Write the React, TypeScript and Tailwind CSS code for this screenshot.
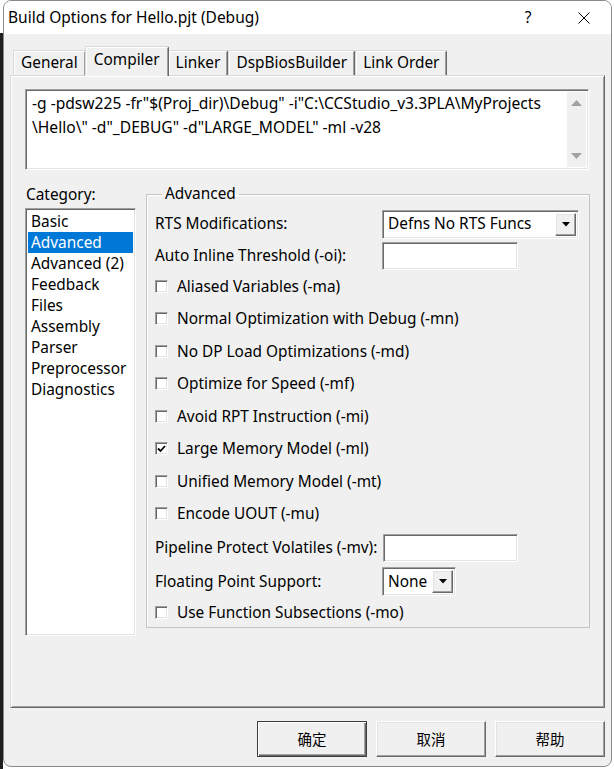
import React from 'react';

const font = { fontFamily: '"Noto Sans", "Noto Sans CJK SC", sans-serif' };

const sunken =
  'border border-t-[#a0a0a0] border-l-[#a0a0a0] border-r-white border-b-white shadow-[inset_1px_1px_0_#696969,inset_-1px_-1px_0_#e3e3e3]';
const raised =
  'border border-t-white border-l-white border-r-[#696969] border-b-[#696969] shadow-[inset_-1px_-1px_0_#a0a0a0,inset_1px_1px_0_#e3e3e3]';

const tabs = ['General', 'Compiler', 'Linker', 'DspBiosBuilder', 'Link Order'];
const categories = ['Basic', 'Advanced', 'Advanced (2)', 'Feedback', 'Files', 'Assembly', 'Parser', 'Preprocessor', 'Diagnostics'];

const checks: { label: string; checked?: boolean }[] = [
  { label: 'Aliased Variables (-ma)' },
  { label: 'Normal Optimization with Debug (-mn)' },
  { label: 'No DP Load Optimizations (-md)' },
  { label: 'Optimize for Speed (-mf)' },
  { label: 'Avoid RPT Instruction (-mi)' },
  { label: 'Large Memory Model (-ml)', checked: true },
  { label: 'Unified Memory Model (-mt)' },
  { label: 'Encode UOUT (-mu)' },
];

const CheckBox = ({ checked }: { checked?: boolean }) => (
  <div className={`w-[13px] h-[13px] bg-white flex items-center justify-center shrink-0 ${sunken}`}>
    {checked && (
      <svg width="9" height="8" viewBox="0 0 9 8">
        <path d="M1 3.5 L3.5 6 L8 1" fill="none" stroke="#000" strokeWidth="1.8" />
      </svg>
    )}
  </div>
);

const CheckRow = ({ label, checked }: { label: string; checked?: boolean }) => (
  <div className="h-[32.5px] flex items-center gap-[9px]">
    <CheckBox checked={checked} />
    <span>{label}</span>
  </div>
);

const DropArrow = () => (
  <div className={`w-[21px] h-full bg-[#f0f0f0] flex items-center justify-center ${raised}`}>
    <svg width="8" height="5" viewBox="0 0 8 5">
      <path d="M0 0 H8 L4 4.5 Z" fill="#000" />
    </svg>
  </div>
);

const Select = ({ value, width }: { value: string; width: string }) => (
  <div className={`${width} h-[29px] bg-white flex items-stretch p-[2px] ${sunken}`}>
    <div className="flex-1 flex items-center pl-[3px]">{value}</div>
    <DropArrow />
  </div>
);

const TextBox = ({ width }: { width: string }) => <div className={`${width} h-[28px] bg-white ${sunken}`} />;

export default function App() {
  return (
    <div className="w-[614px] h-[769px] flex bg-white text-black" style={font}>
      {/* desktop strip at the left */}
      <div className="w-[3px] flex flex-col">
        <div className="h-[33px] bg-white" />
        <div className="flex-1 bg-[#1e1e1e]" />
      </div>

      {/* dialog window */}
      <div className="w-[609px] h-[767px] flex flex-col border border-[#8a8a8a] rounded-lg overflow-hidden bg-[#f0f0f0]">
        {/* title bar */}
        <div className="h-[33px] bg-white flex items-center shrink-0">
          <span className="pl-[4px] text-[15.5px] flex-1">Build Options for Hello.pjt (Debug)</span>
          <span className="text-[15.5px] w-[20px] text-center mr-[40px]">?</span>
          <svg width="12" height="12" viewBox="0 0 12 12" className="mr-[21px]">
            <path d="M0.5 0.5 L11.5 11.5 M11.5 0.5 L0.5 11.5" stroke="#000" strokeWidth="1" />
          </svg>
        </div>

        <div className="flex-1 flex flex-col pt-[12px] pl-[6px] pr-[6px] text-[15.4px]">
          {/* tabs */}
          <div className="h-[29px] flex items-end pl-[3px]">
            {tabs.map((t) => {
              const active = t === 'Compiler';
              return (
                <div
                  key={t}
                  className={`flex items-center justify-center border-t border-l border-t-[#d8d8d8] border-l-[#d8d8d8] border-r border-r-[#696969] shadow-[inset_1px_1px_0_white,inset_-1px_0_0_#a0a0a0] rounded-t-[2px] bg-[#f0f0f0] ${
                    active ? 'h-[30px] -mb-px z-10 px-[8px] -mx-[1px] pb-[4px]' : 'h-[25px] px-[7px]'
                  }`}
                >
                  {t}
                </div>
              );
            })}
          </div>

          {/* tab page */}
          <div className="h-[633px] flex flex-col border border-t-[#d8d8d8] border-l-[#d8d8d8] border-r-[#696969] border-b-[#696969] shadow-[inset_1px_1px_0_white,inset_-1px_-1px_0_#a0a0a0] pt-[13px] pl-[14px] pr-[13px]">
            {/* command line */}
            <div className={`w-[564px] h-[81px] bg-white flex p-[2px] ${sunken}`}>
              <div className="flex-1 pl-[4px] -mt-[1px] leading-[24px] text-[15.6px] whitespace-pre">
                {'-g -pdsw225 -fr"$(Proj_dir)\\Debug" -i"C:\\CCStudio_v3.3PLA\\MyProjects\n\\Hello\\" -d"_DEBUG" -d"LARGE_MODEL" -ml -v28'}
              </div>
              <div className="w-[19px] bg-[#f0f0f0] flex flex-col items-center justify-between py-[8px]">
                <svg width="11" height="6" viewBox="0 0 11 6">
                  <path d="M0 6 L5.5 0 L11 6 Z" fill="#a3a3a3" />
                </svg>
                <svg width="11" height="6" viewBox="0 0 11 6">
                  <path d="M0 0 L11 0 L5.5 6 Z" fill="#a3a3a3" />
                </svg>
              </div>
            </div>

            <div className="flex mt-[15px]">
              {/* category list */}
              <div className="w-[111px] flex flex-col">
                <div className="h-[23px] flex items-center pl-[1px] pb-[4px]">Category:</div>
                <div className={`h-[428px] bg-white p-[2px] ${sunken}`}>
                  {categories.map((c) => (
                    <div
                      key={c}
                      className={`h-[21px] flex items-center pl-[3px] ${c === 'Advanced' ? 'bg-[#0078d7] text-white' : ''}`}
                    >
                      {c}
                    </div>
                  ))}
                </div>
              </div>

              {/* group box */}
              <fieldset className="ml-[10px] w-[444px] h-[443px] border border-[#c4c4c4] shadow-[inset_1px_1px_0_white] pl-[8px] pt-[6px]">
                <legend className="ml-[7px] px-[3px] leading-[18px]">Advanced</legend>
                <div className="h-[30px] flex items-center">
                  <span className="w-[227px]">RTS Modifications:</span>
                  <Select value="Defns No RTS Funcs" width="w-[197px]" />
                </div>
                <div className="h-[28px] mt-[3px] flex items-center">
                  <span className="w-[227px]">Auto Inline Threshold (-oi):</span>
                  <TextBox width="w-[136px]" />
                </div>
                {checks.map((c) => (
                  <CheckRow key={c.label} label={c.label} checked={c.checked} />
                ))}
                <div className="h-[28px] mt-[4px] flex items-center">
                  <span className="w-[228px]">Pipeline Protect Volatiles (-mv):</span>
                  <TextBox width="w-[135px]" />
                </div>
                <div className="h-[29px] mt-[5px] flex items-center">
                  <span className="w-[227px]">Floating Point Support:</span>
                  <Select value="None" width="w-[74px]" />
                </div>
                <CheckRow label="Use Function Subsections (-mo)" />
              </fieldset>
            </div>
          </div>

          {/* dialog buttons */}
          <div className="flex justify-end gap-[9px] mt-[13px] text-[14.5px]" style={{ fontFamily: '"Noto Sans CJK SC", sans-serif' }}>
            <button className="w-[110px] h-[36px] bg-[#f0f0f0] border border-[#3c3c3c] shadow-[inset_1px_1px_0_white,inset_-1px_-1px_0_#696969,inset_-2px_-2px_0_#a0a0a0]">
              确定
            </button>
            <button className={`w-[110px] h-[36px] bg-[#f0f0f0] ${raised}`}>取消</button>
            <button className={`w-[110px] h-[36px] bg-[#f0f0f0] ${raised}`}>帮助</button>
          </div>
        </div>
      </div>
      <div className="flex-1 bg-white" />
    </div>
  );
}
